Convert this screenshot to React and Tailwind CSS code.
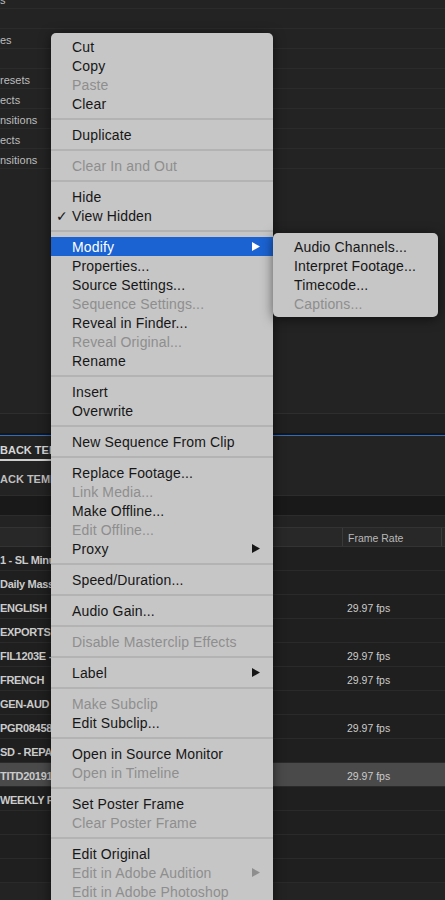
import React from "react";

const topRows = ["s", "", "es", "", "resets", "ects", "nsitions", "ects", "nsitions"];

const clips = [
  { name: "1 - SL Minu", fps: "" },
  { name: "Daily Mass", fps: "" },
  { name: "ENGLISH", fps: "29.97 fps" },
  { name: "EXPORTS", fps: "" },
  { name: "FIL1203E -", fps: "29.97 fps" },
  { name: "FRENCH", fps: "29.97 fps" },
  { name: "GEN-AUD", fps: "" },
  { name: "PGR08458", fps: "29.97 fps" },
  { name: "SD - REPAC", fps: "" },
  { name: "TITD20191", fps: "29.97 fps", selected: true },
  { name: "WEEKLY PI", fps: "" },
  { name: "", fps: "" },
  { name: "", fps: "" },
  { name: "", fps: "" },
];

const menu = [
  [{ label: "Cut" }, { label: "Copy" }, { label: "Paste", off: true }, { label: "Clear" }],
  [{ label: "Duplicate" }],
  [{ label: "Clear In and Out", off: true }],
  [{ label: "Hide" }, { label: "View Hidden", checked: true }],
  [
    { label: "Modify", arrow: true, active: true },
    { label: "Properties..." },
    { label: "Source Settings..." },
    { label: "Sequence Settings...", off: true },
    { label: "Reveal in Finder..." },
    { label: "Reveal Original...", off: true },
    { label: "Rename" },
  ],
  [{ label: "Insert" }, { label: "Overwrite" }],
  [{ label: "New Sequence From Clip" }],
  [
    { label: "Replace Footage..." },
    { label: "Link Media...", off: true },
    { label: "Make Offline..." },
    { label: "Edit Offline...", off: true },
    { label: "Proxy", arrow: true },
  ],
  [{ label: "Speed/Duration..." }],
  [{ label: "Audio Gain..." }],
  [{ label: "Disable Masterclip Effects", off: true }],
  [{ label: "Label", arrow: true }],
  [{ label: "Make Subclip", off: true }, { label: "Edit Subclip..." }],
  [{ label: "Open in Source Monitor" }, { label: "Open in Timeline", off: true }],
  [{ label: "Set Poster Frame" }, { label: "Clear Poster Frame", off: true }],
  [
    { label: "Edit Original" },
    { label: "Edit in Adobe Audition", off: true, arrow: true },
    { label: "Edit in Adobe Photoshop", off: true },
  ],
];

const submenu = [
  { label: "Audio Channels..." },
  { label: "Interpret Footage..." },
  { label: "Timecode..." },
  { label: "Captions...", off: true },
];

const Arrow = ({ color }) => (
  <svg width="8" height="9" viewBox="0 0 8 9" className="absolute right-[13px] top-[5px]">
    <polygon points="0,0 8,4.5 0,9" fill={color} />
  </svg>
);

const MenuItem = ({ item }) => {
  let text = "text-[#161616]";
  if (item.off) text = "text-[#8e8e8e]";
  if (item.active) text = "text-white";
  return (
    <div
      className={`relative h-[19px] pl-[21px] flex items-center leading-none ${text} ${
        item.active ? "bg-[#1b63d2]" : ""
      }`}
    >
      {item.checked && (
        <span className="absolute left-[5px] text-[14px] font-['DejaVu_Sans',sans-serif]">✓</span>
      )}
      {item.label}
      {item.arrow && <Arrow color={item.active ? "#ffffff" : item.off ? "#8e8e8e" : "#161616"} />}
    </div>
  );
};

const App = () => {
  return (
    <div className="relative w-[445px] h-[900px] overflow-hidden bg-[#232323] font-['Liberation_Sans',Arial,sans-serif]">
      {/* effects panel rows */}
      <div className="-mt-[11px]">
        {topRows.map((t, i) => (
          <div
            key={i}
            className="h-[20px] pt-[4px] border-b border-[#2b2b2b] flex items-center text-[11px] text-[#bdbdbd] leading-none"
          >
            {t}
          </div>
        ))}
      </div>
      <div className="h-[244px]" />

      {/* project panel */}
      <div className="border-t border-[#2e2e2e] h-[20px] bg-[#202020]" />
      <div className="h-[2px] bg-[#161616]" />
      <div className="h-px bg-[#2f6dc4]" />
      <div className="h-[23px] pt-[5px] flex items-center text-[11px] font-bold text-[#d6d6d6] leading-none">
        BACK TEM
      </div>
      <div className="h-[2px] w-[51px] bg-[#cfcfcf]" />
      <div className="h-[35px] pt-[3px] flex items-center text-[11px] font-bold text-[#bfbfbf] leading-none border-b border-[#2c2c2c]">
        ACK TEMPL
      </div>
      <div className="h-[20px] bg-[#191919] border-b border-[#2c2c2c]" />
      <div className="h-[11px]" />
      <div className="h-[20px] flex bg-[#282828] border-y border-[#333333] text-[10.5px] text-[#b9b9b9] leading-none">
        <div className="w-[342px]" />
        <div className="w-[100px] border-x border-[#3a3a3a] pl-[5px] pt-[3px] flex items-center">Frame Rate</div>
      </div>
      <div className="bg-[#1f1f1f]">
        {clips.map((c, i) => (
          <div
            key={i}
            className={`h-[24px] pt-[4px] flex items-center border-b border-[#2a2a2a] text-[#cbcbcb] leading-none ${
              c.selected ? "bg-[#4a4a4a]" : ""
            }`}
          >
            <div className="w-[342px] text-[11px] font-bold tracking-[-0.3px]">{c.name}</div>
            <div className="w-[100px] pl-[5px] text-[10.5px]">{c.fps}</div>
          </div>
        ))}
      </div>

      {/* context menu */}
      <div className="absolute left-[51px] top-[33px] w-[222px] h-[880px] pt-[4px] rounded-[5px] bg-[#c6c6c6] shadow-[0_2px_12px_rgba(0,0,0,0.55)] text-[14px] tracking-[0.15px]">
        {menu.map((group, g) => (
          <div key={g}>
            {g > 0 && (
              <div className="h-[12px] flex items-center">
                <div className="h-[2px] w-full bg-[#b3b3b3]" />
              </div>
            )}
            {group.map((item) => (
              <MenuItem key={item.label} item={item} />
            ))}
          </div>
        ))}
      </div>

      {/* submenu */}
      <div className="absolute left-[273px] top-[233px] w-[165px] py-[4px] rounded-[5px] bg-[#c6c6c6] shadow-[0_2px_12px_rgba(0,0,0,0.55)] text-[14px] tracking-[0.15px]">
        {submenu.map((item) => (
          <MenuItem key={item.label} item={item} />
        ))}
      </div>
    </div>
  );
};

export default App;
